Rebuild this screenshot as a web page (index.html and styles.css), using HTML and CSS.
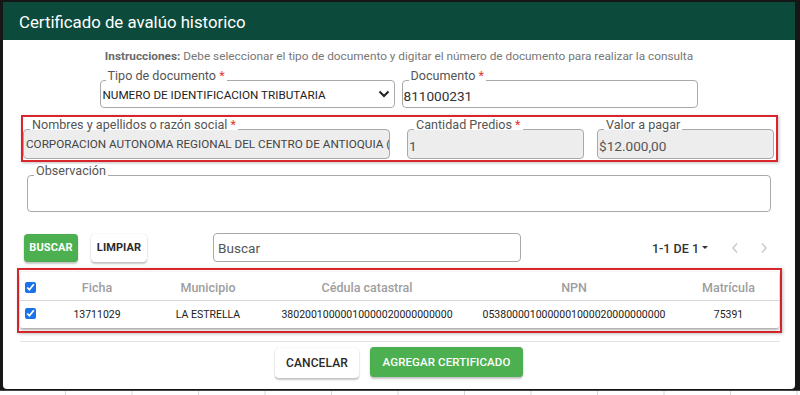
FILE: index.html
```html
<!DOCTYPE html>
<html lang="es">
<head>
<meta charset="utf-8">
<title>Certificado de avalúo historico</title>
<link rel="stylesheet" href="styles.css">
</head>
<body>
<div class="frame">
  <div class="dialog">
    <div class="header">Certificado de avalúo historico</div>
    <div class="instructions"><b>Instrucciones:</b> Debe seleccionar el tipo de documento y digitar el número de documento para realizar la consulta</div>

    <div class="row1">
      <div class="field f-tipo">
        <span class="label">Tipo de documento <i class="req">*</i></span>
        <span class="value small">NUMERO DE IDENTIFICACION TRIBUTARIA</span>
        <svg class="chev" width="12" height="8" viewBox="0 0 12 8"><path d="M1.5 1.5 L6 6 L10.5 1.5" fill="none" stroke="#222" stroke-width="2"/></svg>
      </div>
      <div class="field f-doc">
        <span class="label">Documento <i class="req">*</i></span>
        <span class="value big">811000231</span>
      </div>
    </div>

    <div class="redbox r1">
      <div class="field gray f-nom">
        <span class="label">Nombres y apellidos o razón social <i class="req">*</i></span>
        <span class="value small clip">CORPORACION AUTONOMA REGIONAL DEL CENTRO DE ANTIOQUIA (CORANTIOQUIA)</span>
      </div>
      <div class="field gray f-cant">
        <span class="label">Cantidad Predios <i class="req">*</i></span>
        <span class="value big">1</span>
      </div>
      <div class="field gray f-val">
        <span class="label">Valor a pagar</span>
        <span class="value big">$12.000,00</span>
      </div>
    </div>

    <div class="field f-obs">
      <span class="label">Observación</span>
    </div>

    <div class="toolbar">
      <button class="btn green b-buscar">BUSCAR</button>
      <button class="btn white b-limpiar">LIMPIAR</button>
      <div class="search">Buscar</div>
      <div class="pager">1-1 DE 1 <span class="caret"></span></div>
      <svg class="arrow a-prev" width="8" height="12" viewBox="0 0 8 12"><path d="M6 1.5 L2 6 L6 10.5" fill="none" stroke="#c8c8c8" stroke-width="1.4"/></svg>
      <svg class="arrow a-next" width="8" height="12" viewBox="0 0 8 12"><path d="M2 1.5 L6 6 L2 10.5" fill="none" stroke="#c8c8c8" stroke-width="1.4"/></svg>
    </div>

    <div class="redbox r2">
      <div class="card">
        <div class="trow thead">
          <div class="cell chk"><input type="checkbox" checked></div>
          <div class="cell">Ficha</div>
          <div class="cell">Municipio</div>
          <div class="cell">Cédula catastral</div>
          <div class="cell">NPN</div>
          <div class="cell">Matrícula</div>
        </div>
        <div class="trow tbody">
          <div class="cell chk"><input type="checkbox" checked></div>
          <div class="cell">13711029</div>
          <div class="cell">LA ESTRELLA</div>
          <div class="cell">38020010000010000020000000000</div>
          <div class="cell">0538000010000001000020000000000</div>
          <div class="cell">75391</div>
        </div>
      </div>
    </div>

    <div class="sep"></div>

    <div class="actions">
      <button class="btn white b-cancel">CANCELAR</button>
      <button class="btn green b-add">AGREGAR CERTIFICADO</button>
    </div>
  </div>
</div>
<div class="strip"></div>
</body>
</html>
```

FILE: styles.css
```css
* { box-sizing: border-box; }
html, body { margin: 0; padding: 0; }
body {
  width: 800px;
  height: 395px;
  overflow: hidden;
  background: #fff;
  font-family: Roboto, "Liberation Sans", Arial, sans-serif;
  color: #222;
}
.frame {
  background: #161616;
  padding: 2px 5px 1px 3px;
  height: 390px;
}
.dialog {
  background: #fff;
  height: 387px;
  border-radius: 0 0 4px 4px;
  overflow: hidden;
  display: flex;
  flex-direction: column;
}
.header {
  flex: none;
  height: 38px;
  background: #0c4b3c;
  color: #fff;
  font-size: 16.8px;
  padding-left: 16px;
  padding-top: 1px;
  display: flex;
  align-items: center;
}
.instructions {
  margin-top: 9px;
  line-height: 14px;
  font-size: 11.8px;
  color: #777;
  text-align: center;
}
.instructions b { font-weight: 700; color: #6a6a6a; }

.field {
  position: relative;
  border: 1px solid #a9a9a9;
  border-radius: 4px;
  background: #fff;
  display: flex;
  align-items: center;
}
.field.gray { background: #ededed; }
.label {
  position: absolute;
  left: 6px;
  top: -12px;
  padding: 0 2px;
  font-size: 12.6px;
  line-height: 14px;
  color: #555;
  white-space: nowrap;
  background: linear-gradient(#fff 0 12px, transparent 12px);
}
.req { font-style: normal; color: #e53935; }
.value { white-space: nowrap; color: #222; }
.value.small { font-size: 11.7px; padding-left: 2px; }
.value.big { font-size: 13.6px; padding-left: 1px; color: #333; }
.clip { overflow: hidden; display: block; width: 100%; }

.row1 {
  margin-top: 17px;
  display: flex;
  justify-content: center;
  gap: 7px;
  padding-right: 1px;
}
.f-tipo { width: 295px; height: 28px; padding-top: 1px; }
.f-tipo .label { left: 5px; }
.f-doc { width: 296px; height: 28px; padding-top: 4px; }
.chev { position: absolute; right: 4px; top: 9px; }

.redbox {
  border: 2px solid #d8262c;
  box-shadow: 1px 1px 3px rgba(0,0,0,0.25);
}
.r1 {
  margin: 7px 0 0 18px;
  width: 757px;
  height: 47px;
  padding: 12px 2px 0 0;
  display: flex;
}
.f-nom { width: 367px; height: 30px; }
.f-cant { width: 177px; height: 30px; margin-left: 17px; }
.f-val { width: 177px; height: 30px; margin-left: 13px; }
.f-nom .value { color: #444; padding-right: 4px; }
.f-cant .value, .f-val .value { padding-top: 3px; color: #555; }

.f-obs {
  margin: 13px 0 0 24px;
  width: 744px;
  height: 37px;
}

.toolbar {
  margin-top: 21px;
  height: 29px;
  display: flex;
  align-items: center;
  padding-left: 21px;
}
.btn {
  border: none;
  border-radius: 4px;
  font-family: Roboto, "Liberation Sans", Arial, sans-serif;
  font-weight: 700;
  font-size: 11px;
  letter-spacing: 0.1px;
  padding: 0;
  box-shadow: 0 2px 2px rgba(0,0,0,0.22), 0 0 1px rgba(0,0,0,0.2);
}
.btn.green { background: #4caf50; color: #fff; }
.btn.white { background: #fff; color: #2a2a2a; }
.b-buscar { width: 54px; height: 28px; }
.b-limpiar { width: 56px; height: 28px; margin-left: 13px; }
.search {
  margin-left: 66px;
  width: 308px;
  height: 29px;
  border: 1px solid #a9a9a9;
  border-radius: 4px;
  font-size: 13.6px;
  color: #555;
  padding: 6px 0 0 4px;
}
.pager {
  margin-left: 131px;
  font-size: 12.5px;
  font-weight: 500;
  color: #333;
  display: flex;
  align-items: center;
  gap: 3px;
  padding-top: 1px;
}
.caret {
  width: 0; height: 0;
  border-left: 3px solid transparent;
  border-right: 3px solid transparent;
  border-top: 3.5px solid #333;
  margin-top: -2px;
}
.a-prev { margin-left: 23px; }
.a-next { margin-left: 21px; }

.r2 {
  margin: 6px 0 0 14px;
  width: 765px;
  height: 65px;
  padding: 2px 1px 3px 1px;
}
.card {
  height: 100%;
  background: #fff;
  box-shadow: 0 2px 3px rgba(0,0,0,0.3), 0 0 2px rgba(0,0,0,0.15);
  border-radius: 2px;
}
.trow {
  display: grid;
  grid-template-columns: 22px 110px 112px 206px 208px 1fr;
  align-items: center;
  text-align: center;
}
.thead {
  height: 29px;
  border-bottom: 1px solid #d8d8d8;
  font-size: 12.5px;
  font-weight: 500;
  color: #9e9e9e;
  padding-top: 2px;
}
.tbody {
  height: 27px;
  font-size: 10.5px;
  color: #222;
}
.cell.chk { display: flex; justify-content: flex-start; padding-left: 5px; }
.cell.chk input {
  margin: 0;
  width: 11px;
  height: 11px;
  accent-color: #1a73e8;
}
.tbody .cell.chk input { margin-top: -3px; }

.sep {
  margin: 8px 0 0 17px;
  width: 760px;
  height: 1px;
  background: #e2e2e2;
}
.actions {
  margin-top: 6px;
  display: flex;
  justify-content: center;
  gap: 11px;
}
.b-cancel { width: 84px; height: 30px; font-size: 12px; font-weight: 500; }
.b-add { width: 153px; height: 30px; font-size: 11.5px; font-weight: 500; margin-top: -1px; }

.strip {
  height: 5px;
  border-top: 1px solid #444;
  background-image: linear-gradient(to right, #d6d6d6 0 1px, transparent 1px);
  background-size: 66.5px 100%;
  background-position: 65px 0;
}
```
